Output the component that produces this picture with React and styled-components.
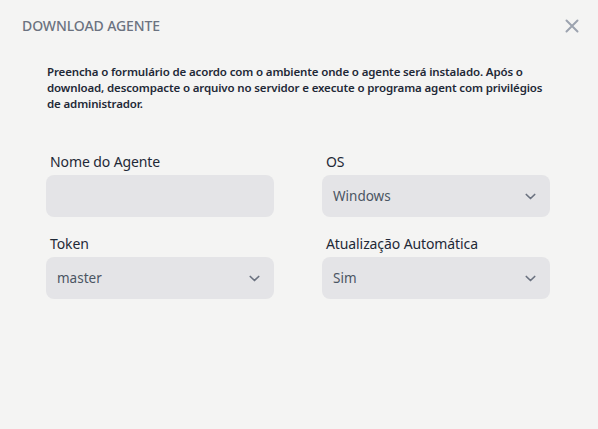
import React from 'react';
import styled, { createGlobalStyle } from 'styled-components';

const Global = createGlobalStyle`
  html, body {
    margin: 0;
    padding: 0;
    background: #f4f4f3;
  }
  body {
    font-family: "Noto Sans", "Open Sans", sans-serif;
  }
`;

const Modal = styled.div`
  width: 598px;
  height: 429px;
  box-sizing: border-box;
  background: #f4f4f3;
  padding: 16px 18px 0 22px;
`;

const Header = styled.div`
  display: flex;
  align-items: center;
  justify-content: space-between;
  height: 20px;
`;

const Title = styled.h2`
  margin: 0;
  font-size: 14px;
  line-height: 20px;
  font-weight: 500;
  color: #6b7280;
  letter-spacing: -0.1px;
`;

const Close = styled.button`
  border: 0;
  background: none;
  padding: 0;
  width: 16px;
  height: 16px;
  display: flex;
  align-items: center;
  justify-content: center;
  color: #9ca3af;
  cursor: pointer;
`;

const Body = styled.div`
  padding: 0 26px 0 25px;
`;

const Description = styled.p`
  margin: 28px 0 0;
  font-size: 11.5px;
  line-height: 16px;
  font-weight: 600;
  color: #1f2937;
  letter-spacing: -0.14px;
`;

const Grid = styled.div`
  display: grid;
  grid-template-columns: 228px 228px;
  column-gap: 48px;
  row-gap: 17px;
  margin-top: 40px;
  margin-left: -1px;
`;

const Field = styled.label`
  display: flex;
  flex-direction: column;
`;

const Label = styled.span`
  font-size: 14px;
  line-height: 20px;
  color: #1f2937;
  padding-left: 4px;
  margin-bottom: 3px;
  letter-spacing: -0.1px;
`;

const Box = styled.div`
  position: relative;
  height: 42px;
  border-radius: 8px;
  background: #e4e4e7;
  display: flex;
  align-items: center;
  padding: 0 14px 0 11px;
  font-size: 13.5px;
  color: #4b5563;
`;

const Chevron = styled.svg`
  margin-left: auto;
  color: #6b7280;
`;

const Select = ({ value }) => (
  <Box>
    {value}
    <Chevron width="11" height="7" viewBox="0 0 11 7" fill="none" stroke="currentColor" strokeWidth="1.7" strokeLinecap="round" strokeLinejoin="round">
      <path d="M1.3 1.5l4.2 4 4.2-4" />
    </Chevron>
  </Box>
);

export default function App() {
  return (
    <Modal>
      <Global />
      <Header>
        <Title>DOWNLOAD AGENTE</Title>
        <Close aria-label="Fechar">
          <svg width="14" height="14" viewBox="0 0 14 14" stroke="currentColor" strokeWidth="2" strokeLinecap="round">
            <path d="M1.5 1.5l11 11M12.5 1.5l-11 11" />
          </svg>
        </Close>
      </Header>
      <Body>
        <Description>
          Preencha o formulário de acordo com o ambiente onde o agente será instalado. Após o download, descompacte o arquivo no servidor e execute o programa agent com privilégios de administrador.
        </Description>
        <Grid>
          <Field>
            <Label>Nome do Agente</Label>
            <Box />
          </Field>
          <Field>
            <Label>OS</Label>
            <Select value="Windows" />
          </Field>
          <Field>
            <Label>Token</Label>
            <Select value="master" />
          </Field>
          <Field>
            <Label>Atualização Automática</Label>
            <Select value="Sim" />
          </Field>
        </Grid>
      </Body>
    </Modal>
  );
}
